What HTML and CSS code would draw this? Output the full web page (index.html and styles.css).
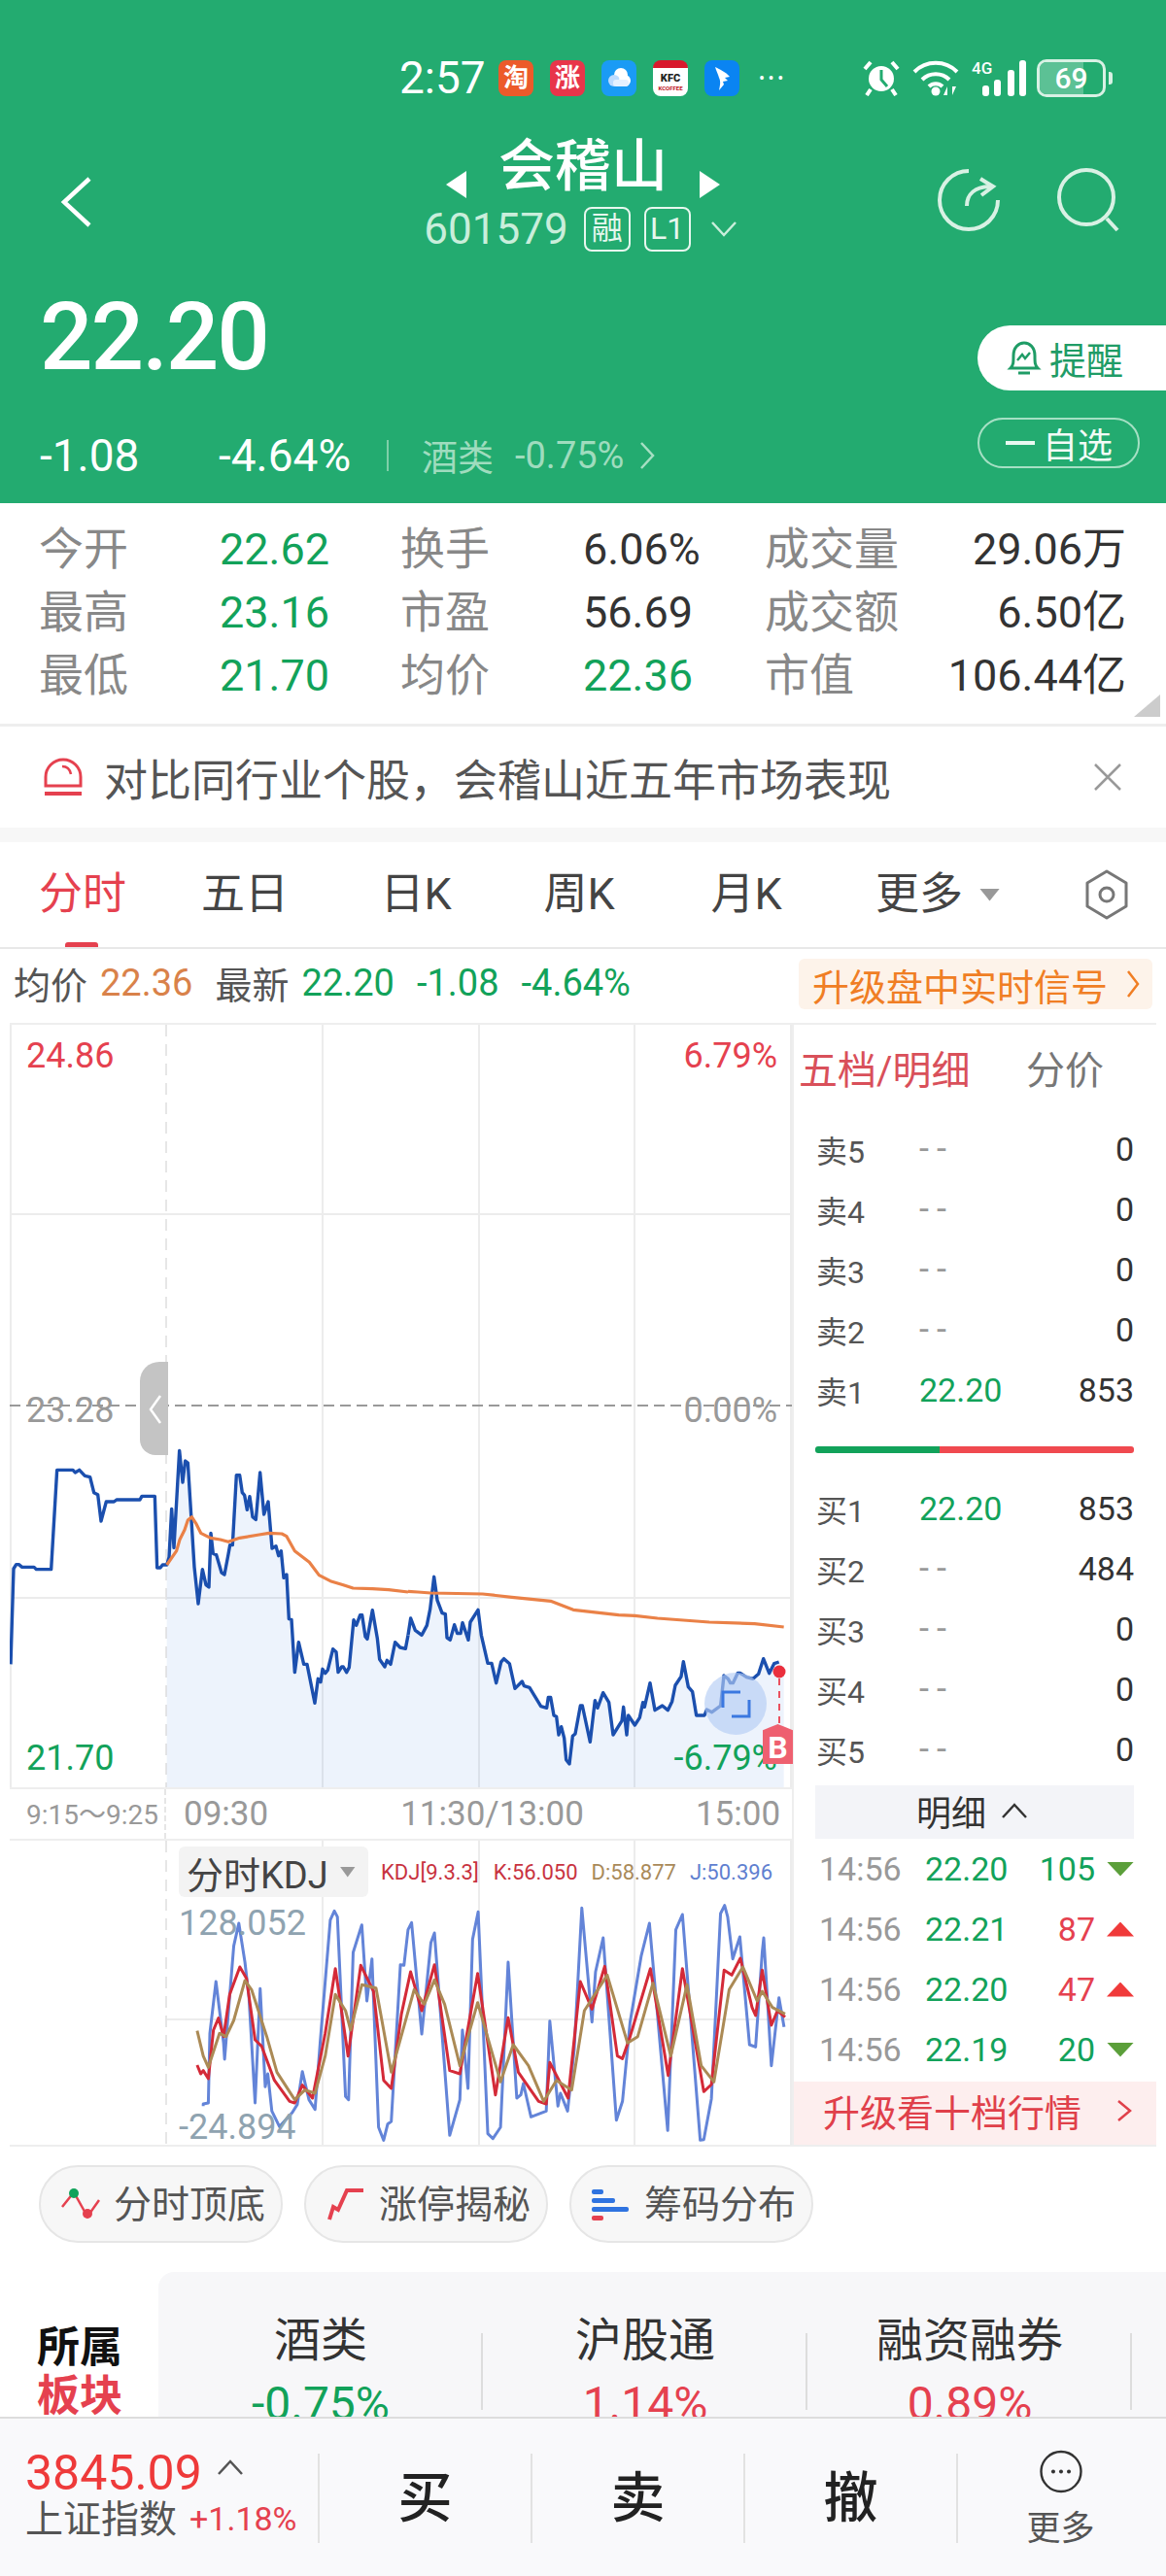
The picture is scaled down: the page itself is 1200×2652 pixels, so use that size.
FILE: index.html
```html
<!DOCTYPE html>
<html lang="zh-CN">
<head>
    <meta charset="UTF-8">
    <meta name="viewport" content="width=device-width, initial-scale=1.0">
    <title>会稽山</title>
    <link rel="stylesheet" href="styles.css">
</head>
<body>
<div class="page">
<main class="content">
    <header class="top">
        <div class="status">
            <span class="clock">2:57</span>
            <span class="app app-tao">淘</span>
            <span class="app app-zhang">涨</span>
            <span class="app app-cloud">
                <svg width="36" height="36" viewBox="0 0 36 36"><circle cx="20" cy="15" r="7" fill="#fff"/><circle cx="13" cy="21" r="6" fill="#bcdcff"/><circle cx="24" cy="21" r="6" fill="#fff"/><rect x="12" y="20" width="16" height="7" rx="3" fill="#e4f1ff"/></svg>
            </span>
            <span class="app app-kfc"><b>KFC</b><i>KCOFFEE</i></span>
            <span class="app app-wing">
                <svg width="36" height="36" viewBox="0 0 36 36"><path d="M11 7c4 2 11 5 15 10l-5 1 3 3-5 1 1 3-5 6c1-5 2-9 0-13-1-4-3-7-4-11z" fill="#fff"/></svg>
            </span>
            <span class="more-dots">•••</span>
            <span class="status-right">
                <svg width="40" height="38" viewBox="0 0 40 38" fill="none" stroke="#fff"><circle cx="20" cy="20" r="13" fill="#fff" stroke="none"/><path d="M20 11v10l6 7" stroke="#23ab70" stroke-width="3"/><path d="M3 10l6-7M37 10l-6-7M9 31l-4 6M31 31l4 6" stroke-width="4"/></svg>
                <svg width="48" height="38" viewBox="0 0 48 38" fill="none" stroke="#fff" stroke-width="4"><path d="M2 13a31 31 0 0 1 44 0M10 21a20 20 0 0 1 28 0M17 28a10 10 0 0 1 14 0"/><circle cx="24" cy="33" r="4.5" fill="#fff" stroke="none"/><path d="M36 37v-9l-4 9zM41 28v9l4-9z" fill="#fff" stroke="none"/></svg>
                <span class="signal">
                    <em>4G</em>
                    <svg width="48" height="37" viewBox="0 0 48 37" fill="#fff"><rect x="3" y="26" width="7" height="11" rx="3"/><rect x="15" y="20" width="7" height="17" rx="3"/><rect x="29" y="10" width="7" height="27" rx="3"/><rect x="41" y="0" width="7" height="37" rx="3"/></svg>
                </span>
                <span class="battery"><span class="battery-fill"></span><span class="battery-num">69</span></span>
                <span class="battery-cap"></span>
            </span>
        </div>

        <div class="nav">
            <svg class="back" width="32" height="52" viewBox="0 0 32 52" fill="none" stroke="#fff" stroke-width="4.5"><path d="M30 2L4 26l26 24"/></svg>
            <div class="nav-mid">
                <div class="title-row">
                    <span class="tri-left"></span>
                    <h1>会稽山</h1>
                    <span class="tri-right"></span>
                </div>
                <div class="code-row">
                    <span class="code">601579</span>
                    <span class="tag">融</span>
                    <span class="tag">L1</span>
                    <svg width="26" height="16" viewBox="0 0 26 16" fill="none" stroke="#c9eedb" stroke-width="2.5"><path d="M1 1l12 13L25 1"/></svg>
                </div>
            </div>
            <div class="nav-actions">
                <svg width="66" height="68" viewBox="965 174 66 68" fill="none" stroke="#d8f1e4" stroke-width="4"><path d="M997 177A30 30 0 1 0 1027 207"/><path d="M995 213c0-12 8-20 26-20"/><path d="M1009 185l13 8-12 9"/></svg>
                <svg width="64" height="66" viewBox="1088 174 64 66" fill="none" stroke="#d8f1e4" stroke-width="4"><circle cx="1118" cy="204" r="28"/><path d="M1139 226l11 12"/></svg>
            </div>
        </div>

        <div class="quote">
            <div>
                <div class="price">22.20</div>
                <div class="change">
                    <span class="chg-a">-1.08</span>
                    <span class="chg-b">-4.64%</span>
                    <span class="chg-sep"></span>
                    <span class="chg-sector">酒类</span>
                    <span class="chg-sector-num">-0.75%</span>
                    <svg width="16" height="30" viewBox="0 0 16 30" fill="none" stroke="#a6dfc3" stroke-width="2.5"><path d="M2 2l12 13L2 28"/></svg>
                </div>
            </div>
            <div class="quote-btns">
                <div class="remind">
                    <svg width="36" height="38" viewBox="0 0 36 38" fill="none" stroke="#1f9c66" stroke-width="3"><path d="M4 29c3-3 3-6 3-13C7 8 12 3 18 3s11 5 11 13c0 7 0 10 3 13z"/><path d="M12 34h12"/><path d="M11 21l5-6 3 4 5-6" stroke-width="2.5"/></svg>
                    <span>提醒</span>
                </div>
                <div class="watch"><i></i><span>自选</span></div>
            </div>
        </div>
    </header>

    <section class="stats">
        <span class="stat-label">今开</span><span class="stat-val up">22.62</span>
        <span class="stat-label">换手</span><span class="stat-val">6.06%</span>
        <span class="stat-label">成交量</span><span class="stat-val last">29.06万</span>
        <span class="stat-label">最高</span><span class="stat-val up">23.16</span>
        <span class="stat-label">市盈</span><span class="stat-val">56.69</span>
        <span class="stat-label">成交额</span><span class="stat-val last">6.50亿</span>
        <span class="stat-label">最低</span><span class="stat-val up">21.70</span>
        <span class="stat-label">均价</span><span class="stat-val up">22.36</span>
        <span class="stat-label">市值</span><span class="stat-val last">106.44亿</span>
        <span class="corner"></span>
    </section>

    <section class="notice">
        <svg width="42" height="40" viewBox="0 0 42 40" fill="none" stroke="#e5414f" stroke-width="3"><path d="M3 29V20a18 18 0 0 1 36 0v9z"/><path d="M20 9c5 0 8 3 9 8" stroke-width="2.5"/><path d="M2 37h38" stroke-width="4"/></svg>
        <span class="notice-text">对比同行业个股，会稽山近五年市场表现</span>
        <svg class="notice-close" width="30" height="28" viewBox="0 0 30 28" fill="none" stroke="#999" stroke-width="2.5"><path d="M2 1l26 26M28 1L2 27"/></svg>
    </section>

    <nav class="tabs">
        <span class="tab active">分时</span>
        <span class="tab">五日</span>
        <span class="tab">日K</span>
        <span class="tab">周K</span>
        <span class="tab">月K</span>
        <span class="tab tab-more">更多<i></i></span>
        <svg class="tab-gear" width="48" height="52" viewBox="0 0 48 52" fill="none" stroke="#777" stroke-width="3"><path d="M24 2l20 12v24L24 50 4 38V14z" stroke-linejoin="round"/><circle cx="24" cy="26" r="7"/></svg>
    </nav>

    <div class="info">
        <span class="info-name">均价</span><span class="info-avg">22.36</span>
        <span class="info-name info-new">最新</span><span class="info-num">22.20</span>
        <span class="info-num info-gap">-1.08</span><span class="info-num info-gap">-4.64%</span>
        <span class="upgrade-chip">升级盘中实时信号
            <svg width="14" height="30" viewBox="0 0 14 30" fill="none" stroke="#f07e24" stroke-width="2.5"><path d="M2 2l10 13L2 28"/></svg>
        </span>
    </div>

    <section class="market">
        <div class="charts">
            <div class="chart">
                <svg class="chart-svg" width="805" height="785" viewBox="10 1055 805 785">
                    <g stroke="#ececec" stroke-width="2" fill="none">
                        <path d="M11 1055V1840M332 1055V1840M493 1055V1840M653 1055V1840M814 1055V1840M10 1250H815M10 1645H815"/>
                        <path d="M171 1055V1840" stroke-dasharray="12 8" stroke="#e6e6e6"/>
                    </g>
                    <path d="M10 1447H815" stroke="#999" stroke-width="2" stroke-dasharray="11 6"/>

                    <!-- 分时线 左半段 -->
                    <g transform="translate(0,1440) scale(.33333)">
                        <polygon class="area" points="515,513 522,490 530,340 537,460 554,160 564,258 572,192 580,198 600,520 612,633 625,527 636,575 645,582 651,415 658,478 668,482 684,537 693,543 705,480 710,452 718,452 730,236 740,236 748,290 755,298 763,343 771,302 780,365 790,373 803,228 815,357 828,318 840,462 852,455 860,485 868,470 876,553 885,543 892,680 900,682 910,845 922,752 938,820 948,820 972,940 982,865 990,875 996,835 1004,848 1012,838 1028,773 1038,782 1044,845 1055,828 1060,828 1070,845 1078,830 1092,683 1100,700 1112,668 1118,668 1128,735 1134,742 1150,653 1165,740 1172,805 1188,828 1195,808 1206,820 1220,752 1235,768 1252,772 1260,730 1260,1200 515,1200"/>
                        <polyline class="line-price" points="33,820 42,525 50,512 58,512 68,520 105,520 112,527 158,527 176,220 225,220 232,228 245,220 262,238 278,242 290,290 302,296 312,378 328,318 352,318 360,312 432,312 438,301 478,301 485,522 495,522 502,513 515,513 522,490 530,340 537,460 554,160 564,258 572,192 580,198 600,520 612,633 625,527 636,575 645,582 651,415 658,478 668,482 684,537 693,543 705,480 710,452 718,452 730,236 740,236 748,290 755,298 763,343 771,302 780,365 790,373 803,228 815,357 828,318 840,462 852,455 860,485 868,470 876,553 885,543 892,680 900,682 910,845 922,752 938,820 948,820 972,940 982,865 990,875 996,835 1004,848 1012,838 1028,773 1038,782 1044,845 1055,828 1060,828 1070,845 1078,830 1092,683 1100,700 1112,668 1118,668 1128,735 1134,742 1150,653 1165,740 1172,805 1188,828 1195,808 1206,820 1220,752 1235,768 1252,772 1260,730"/>
                        <polyline class="line-avg" points="515,513 545,470 555,435 570,405 580,375 592,365 605,385 620,415 650,430 680,435 705,442 740,430 800,420 830,415 870,417 885,425 910,470 955,505 985,545 1020,563 1060,575 1090,585 1150,587 1200,590 1260,597"/>
                    </g>
                    <!-- 分时线 右半段 -->
                    <g transform="translate(410,1540) scale(.33333)">
                        <polygon class="area" points="30,430 38,378 52,415 72,430 88,400 98,350 110,250 120,322 135,362 145,365 150,438 160,445 173,398 182,425 192,425 198,392 216,445 222,390 246,352 256,430 276,517 288,517 302,578 317,513 326,503 343,518 360,595 382,573 388,587 405,592 440,650 458,655 463,622 470,622 480,678 488,682 495,738 503,713 512,748 518,815 528,828 538,742 546,735 562,648 568,648 592,760 607,632 615,655 632,608 650,638 663,738 690,695 695,652 705,738 710,678 730,708 745,685 755,638 760,652 777,578 792,662 815,648 832,662 845,635 855,585 873,558 880,512 895,590 908,605 920,678 945,678 952,660 968,668 995,648 1005,555 1018,565 1025,578 1033,578 1048,547 1055,547 1075,560 1095,565 1112,550 1127,503 1145,548 1160,518 1175,513 1190,530 1190,900 30,900"/>
                        <polyline class="line-price" points="30,430 38,378 52,415 72,430 88,400 98,350 110,250 120,322 135,362 145,365 150,438 160,445 173,398 182,425 192,425 198,392 216,445 222,390 246,352 256,430 276,517 288,517 302,578 317,513 326,503 343,518 360,595 382,573 388,587 405,592 440,650 458,655 463,622 470,622 480,678 488,682 495,738 503,713 512,748 518,815 528,828 538,742 546,735 562,648 568,648 592,760 607,632 615,655 632,608 650,638 663,738 690,695 695,652 705,738 710,678 730,708 745,685 755,638 760,652 777,578 792,662 815,648 832,662 845,635 855,585 873,558 880,512 895,590 908,605 920,678 945,678 952,660 968,668 995,648 1005,555 1018,565 1025,578 1033,578 1048,547 1055,547 1075,560 1095,565 1112,550 1127,503 1145,548 1160,518 1175,513"/>
                        <polyline class="line-avg" points="30,295 60,297 100,300 260,303 350,313 470,325 540,352 680,368 730,370 800,378 960,390 1100,395 1190,405"/>
                    </g>

                    <circle cx="757" cy="1754" r="32" fill="#b4cdf5" fill-opacity=".65"/>
                    <path d="M744 1758v-16h18M753 1767h18v-17" fill="none" stroke="#3b78e0" stroke-width="3"/>
                    <circle cx="802" cy="1721" r="6.5" fill="#ea2f3d"/>
                    <path d="M802 1728v47" stroke="#ea5060" stroke-width="2" stroke-dasharray="7 6"/>
                </svg>

                <span class="lbl lbl-left lbl-top red">24.86</span>
                <span class="lbl lbl-right lbl-top red">6.79%</span>
                <span class="lbl lbl-left lbl-mid gray">23.28</span>
                <span class="lbl lbl-right lbl-mid gray">0.00%</span>
                <span class="lbl lbl-left lbl-low green">21.70</span>
                <span class="lbl lbl-right lbl-low green">-6.79%</span>
                <span class="b-mark">B</span>
                <span class="handle">
                    <svg width="14" height="32" viewBox="0 0 14 32" fill="none" stroke="#fff" stroke-width="2.5"><path d="M12 2L2 16l10 14"/></svg>
                </span>
            </div>

            <div class="axis">
                <span class="axis-pre">9:15～9:25</span>
                <span class="axis-a">09:30</span>
                <span class="axis-b">11:30/13:00</span>
                <span class="axis-c">15:00</span>
            </div>

            <div class="kdj">
                <svg class="kdj-svg" width="805" height="313" viewBox="10 1895 805 313">
                    <g stroke="#ececec" stroke-width="2" fill="none">
                        <path d="M332 1895V2208M493 1895V2208M653 1895V2208M814 1895V2208M171 2079H815"/>
                        <path d="M171 1895V2208" stroke-dasharray="12 8" stroke="#e6e6e6"/>
                    </g>
                    <g transform="translate(0,1840) scale(.52296,.33333)" fill="none">
                        <polyline class="kdj-line" stroke="#6384d8" points="400,985 400,978 410,975 413,760 425,600 440,790 442,840 460,490 470,420 482,540 490,650 502,975 512,622 522,925 527,885 535,1000 550,1048 575,1005 585,980 595,878 608,965 620,995 630,790 650,410 658,382 664,400 680,955 686,965 695,510 712,425 722,660 732,530 745,1050 755,1090 763,1040 770,1032 788,548 795,550 803,440 810,418 830,762 848,480 855,450 885,1075 905,965 910,750 921,930 930,470 941,385 960,1070 970,1085 985,1050 1000,540 1017,960 1025,950 1030,915 1045,1018 1075,1000 1082,722 1098,985 1103,945 1117,1000 1130,810 1145,373 1165,725 1172,570 1187,465 1213,1028 1225,970 1240,725 1262,520 1278,420 1314,1060 1330,440 1343,393 1378,1090 1385,1088 1400,962 1418,390 1426,365 1432,400 1442,530 1456,462 1475,795 1487,802 1500,510 1503,465 1518,860 1533,650 1543,740"/>
                        <polyline class="kdj-line" stroke="#d42a38" points="388,858 395,885 400,875 410,900 420,750 430,713 440,770 452,640 472,555 485,590 502,780 515,800 540,905 570,970 580,975 595,920 615,960 640,760 660,560 685,830 710,550 735,630 755,905 770,930 790,700 808,570 830,690 855,548 885,875 905,885 940,575 975,950 1000,712 1020,880 1060,970 1075,978 1082,850 1118,960 1142,600 1165,685 1190,553 1215,830 1225,838 1240,770 1280,560 1315,890 1343,560 1385,940 1400,918 1425,565 1440,580 1457,528 1480,680 1487,705 1500,565 1518,735 1530,690 1545,710"/>
                        <polyline class="kdj-line" stroke="#ab8a55" points="388,752 400,830 410,865 432,760 445,770 460,720 482,597 495,625 525,770 545,880 580,965 600,935 620,945 640,830 660,640 680,690 690,750 712,610 740,620 770,880 815,625 835,670 855,595 875,670 905,860 940,665 985,910 1010,795 1040,860 1070,970 1095,905 1125,935 1150,690 1195,580 1235,790 1255,770 1285,605 1320,830 1352,610 1380,860 1405,910 1435,625 1462,555 1490,660 1500,630 1520,680 1545,700"/>
                    </g>
                </svg>
                <div class="kdj-legend">
                    <span class="kdj-chip">分时KDJ<i></i></span>
                    <span class="leg leg-k">KDJ[9.3.3]</span>
                    <span class="leg leg-k">K:56.050</span>
                    <span class="leg leg-d">D:58.877</span>
                    <span class="leg leg-j">J:50.396</span>
                </div>
                <span class="kdj-max">128.052</span>
                <span class="kdj-min">-24.894</span>
            </div>
        </div>

        <aside class="side">
            <div class="side-head"><span class="side-on">五档/明细</span><span class="side-off">分价</span></div>
            <div class="book">
                <div class="book-row"><span>卖5</span><span class="dash">--</span><span class="vol">0</span></div>
                <div class="book-row"><span>卖4</span><span class="dash">--</span><span class="vol">0</span></div>
                <div class="book-row"><span>卖3</span><span class="dash">--</span><span class="vol">0</span></div>
                <div class="book-row"><span>卖2</span><span class="dash">--</span><span class="vol">0</span></div>
                <div class="book-row"><span>卖1</span><span class="green">22.20</span><span class="vol">853</span></div>
            </div>
            <div class="ratio"><span class="ratio-buy"></span><span class="ratio-sell"></span></div>
            <div class="book book-buy">
                <div class="book-row"><span>买1</span><span class="green">22.20</span><span class="vol">853</span></div>
                <div class="book-row"><span>买2</span><span class="dash">--</span><span class="vol">484</span></div>
                <div class="book-row"><span>买3</span><span class="dash">--</span><span class="vol">0</span></div>
                <div class="book-row"><span>买4</span><span class="dash">--</span><span class="vol">0</span></div>
                <div class="book-row"><span>买5</span><span class="dash">--</span><span class="vol">0</span></div>
            </div>
            <div class="detail-head">明细
                <svg width="26" height="16" viewBox="0 0 26 16" fill="none" stroke="#333" stroke-width="2.5"><path d="M1 15L13 2l12 13"/></svg>
            </div>
            <div class="deal"><span class="deal-time">14:56</span><span class="green">22.20</span><span class="deal-vol green">105</span><i class="down"></i></div>
            <div class="deal"><span class="deal-time">14:56</span><span class="green">22.21</span><span class="deal-vol red">87</span><i class="rise"></i></div>
            <div class="deal"><span class="deal-time">14:56</span><span class="green">22.20</span><span class="deal-vol red">47</span><i class="rise"></i></div>
            <div class="deal"><span class="deal-time">14:56</span><span class="green">22.19</span><span class="deal-vol green">20</span><i class="down"></i></div>
            <div class="upgrade-ten">升级看十档行情
                <svg width="16" height="24" viewBox="0 0 16 24" fill="none" stroke="#e0404a" stroke-width="2.5"><path d="M2 2l12 10L2 22"/></svg>
            </div>
        </aside>
    </section>

    <div class="pills">
        <span class="pill">
            <svg width="40" height="34" viewBox="0 0 40 34" fill="none"><path d="M1 20L13 5l14 25 12-17" stroke="#e5414f" stroke-width="2.5"/><circle cx="13" cy="6" r="5" fill="#12a25a"/><circle cx="27" cy="27" r="5" fill="#e5414f"/></svg>
            <span>分时顶底</span>
        </span>
        <span class="pill">
            <svg width="40" height="34" viewBox="0 0 40 34" fill="none" stroke="#e5414f" stroke-width="4"><path d="M3 33l4-13 5 3 9-20h17"/></svg>
            <span>涨停揭秘</span>
        </span>
        <span class="pill">
            <svg width="40" height="34" viewBox="0 0 40 34"><rect x="0" y="2" width="12" height="5" rx="2" fill="#2f73e0"/><rect x="0" y="11" width="24" height="5" rx="2" fill="#2f73e0"/><rect x="0" y="20" width="38" height="5" rx="2" fill="#2f73e0"/><rect x="0" y="29" width="12" height="5" rx="2" fill="#e5414f"/></svg>
            <span>筹码分布</span>
        </span>
    </div>

    <section class="sector">
        <div class="sector-label">所属<em>板块</em></div>
        <div class="sector-card">
            <div class="sector-item"><span class="sector-name">酒类</span><span class="sector-pct green">-0.75%</span></div>
            <div class="sector-item"><span class="sector-name">沪股通</span><span class="sector-pct red">1.14%</span></div>
            <div class="sector-item"><span class="sector-name">融资融券</span><span class="sector-pct red">0.89%</span></div>
        </div>
    </section>
</main>

<footer class="bar">
    <div class="bar-idx">
        <div class="idx-top"><span class="idx-num">3845.09</span>
            <svg width="26" height="16" viewBox="0 0 26 16" fill="none" stroke="#555" stroke-width="2.5"><path d="M1 15L13 2l12 13"/></svg>
        </div>
        <div class="idx-bottom"><span class="idx-name">上证指数</span><span class="idx-chg">+1.18%</span></div>
    </div>
    <div class="bar-btn">买</div>
    <div class="bar-btn">卖</div>
    <div class="bar-btn">撤</div>
    <div class="bar-btn bar-more">
        <svg width="56" height="56" viewBox="0 0 56 56" fill="none" stroke="#333" stroke-width="3"><circle cx="28" cy="28" r="25.5"/><circle cx="18" cy="28" r="2.5" fill="#333" stroke="none"/><circle cx="28" cy="28" r="2.5" fill="#333" stroke="none"/><circle cx="38" cy="28" r="2.5" fill="#333" stroke="none"/></svg>
        <span>更多</span>
    </div>
</footer>
</div>
</body>
</html>
```

FILE: styles.css
```css
* {
    box-sizing: border-box;
}
body {
    margin: 0;
    background-color: #fff;
    color: #333;
    font-family: Roboto, "Noto Sans CJK SC", sans-serif;
}
i, em {
    font-style: normal;
}
.page {
    width: 1200px;
    height: 2652px;
    display: flex;
    flex-direction: column;
    overflow: hidden;
}
.content {
    height: 2488px;
    overflow: hidden;
}
.green { color: #12a25a; }
.red { color: #e5414f; }
.gray { color: #999; }

/* 顶部绿色区 */
.top {
    height: 518px;
    background-color: #23ab70;
    color: #fff;
    padding-top: 60px;
}
.status {
    display: flex;
    align-items: center;
    height: 40px;
    padding-left: 411px;
}
.clock {
    width: 86px;
    margin-right: 16px;
    font-size: 46px;
    line-height: 40px;
}
.app {
    width: 36px;
    height: 37px;
    margin-right: 17px;
    border-radius: 8px;
    display: flex;
    flex-direction: column;
    align-items: center;
    justify-content: center;
    overflow: hidden;
    font-size: 26px;
    line-height: 30px;
    font-weight: 700;
}
.app-tao { background-color: #ec5a2a; }
.app-zhang { background-color: #e8354a; }
.app-cloud { background-color: #1a9bf5; }
.app-kfc {
    background-color: #fff;
    color: #b01020;
    border-top: 8px solid #d8182c;
}
.app-kfc b {
    font-size: 11px;
    line-height: 13px;
    color: #222;
}
.app-kfc i {
    font-size: 6px;
    line-height: 8px;
    color: #c01020;
}
.app-wing { background-color: #0a84f2; }
.more-dots {
    width: 30px;
    margin-left: 3px;
    font-size: 18px;
    letter-spacing: 3.5px;
    white-space: nowrap;
}
.status-right {
    display: flex;
    align-items: center;
    margin-left: 76px;
}
.status-right > svg:nth-child(2) {
    margin-left: 12px;
}
.signal {
    position: relative;
    width: 58px;
    height: 38px;
    margin-left: 11px;
    display: flex;
    align-items: flex-end;
    justify-content: flex-end;
}
.signal em {
    position: absolute;
    left: 2px;
    top: 0;
    font-size: 17px;
    line-height: 18px;
    font-weight: 500;
}
.battery {
    position: relative;
    width: 71px;
    height: 39px;
    margin-left: 11px;
    border: 3px solid #d8f1e4;
    border-radius: 10px;
    overflow: hidden;
    display: flex;
    align-items: center;
    justify-content: center;
}
.battery-fill {
    position: absolute;
    left: 0;
    top: 0;
    bottom: 0;
    width: 69%;
    background-color: #5cc195;
}
.battery-num {
    position: relative;
    font-size: 30px;
    font-weight: 500;
}
.battery-cap {
    width: 4px;
    height: 13px;
    margin-left: 3px;
    background-color: #d8f1e4;
    border-radius: 0 3px 3px 0;
}

.nav {
    display: grid;
    grid-template-columns: 350px 500px 350px;
    height: 118px;
    margin-top: 43px;
}
.back {
    margin: 39px 0 0 62px;
}
.nav-mid {
    display: flex;
    flex-direction: column;
    align-items: center;
}
.title-row {
    display: flex;
    align-items: flex-start;
    height: 70px;
}
.title-row h1 {
    margin: 0 33px;
    font-size: 58px;
    line-height: 56px;
    font-weight: 500;
}
.tri-left, .tri-right {
    width: 21px;
    height: 28px;
    margin-top: 33px;
    background-color: #fff;
}
.tri-left { clip-path: polygon(100% 0, 100% 100%, 0 50%); }
.tri-right { clip-path: polygon(0 0, 0 100%, 100% 50%); }
.code-row {
    display: flex;
    align-items: center;
    height: 46px;
    margin-left: -6px;
}
.code {
    font-size: 44px;
    line-height: 46px;
    color: #c9eedb;
    margin-right: 16px;
}
.tag {
    min-width: 48px;
    height: 46px;
    margin-right: 14px;
    border: 2px solid #e6f7ee;
    border-radius: 8px;
    text-align: center;
    font-size: 32px;
    line-height: 40px;
    color: #e6f7ee;
}
.code-row svg {
    margin: 0 0 0 7px;
}
.nav-actions {
    display: flex;
    justify-content: flex-end;
    gap: 57px;
    padding: 30px 48px 0 0;
}

.quote {
    display: flex;
    justify-content: space-between;
    padding-left: 44px;
    margin-top: 36px;
}
.price {
    height: 100px;
    margin-left: -3px;
    font-size: 96px;
    line-height: 100px;
    letter-spacing: -2px;
    font-weight: 500;
}
.change {
    display: flex;
    align-items: center;
    height: 50px;
    margin-top: 47px;
    font-size: 46px;
}
.chg-a {
    width: 184px;
    margin-left: -3px;
}
.chg-b {
    width: 173px;
    white-space: nowrap;
}
.chg-sep {
    width: 2px;
    height: 32px;
    background-color: #7fcfa9;
    margin-right: 34px;
}
.chg-sector {
    width: 96px;
    font-size: 37px;
    color: #9fdcbe;
}
.chg-sector-num {
    width: 128px;
    font-size: 38px;
    color: #9fdcbe;
    white-space: nowrap;
}
.quote-btns {
    display: flex;
    flex-direction: column;
    align-items: flex-end;
    margin-top: 38px;
}
.remind {
    display: flex;
    align-items: center;
    gap: 8px;
    width: 194px;
    height: 67px;
    padding-left: 30px;
    background-color: #fff;
    border-radius: 34px 0 0 34px;
    color: #1f9c66;
    font-size: 38px;
}
.watch {
    display: flex;
    align-items: center;
    width: 167px;
    height: 52px;
    margin: 28px 27px 0 0;
    padding-left: 27px;
    border: 2px solid #a5e0c4;
    border-radius: 26px;
    font-size: 36px;
    color: #f2fbf6;
}
.watch i {
    width: 30px;
    height: 4px;
    margin-right: 8px;
    background-color: #e8f8f0;
}

/* 行情表 */
.stats {
    position: relative;
    display: grid;
    grid-template-columns: 186px 186px 188px 187px 180px 1fr;
    grid-auto-rows: 65px;
    align-items: center;
    height: 230px;
    padding: 15px 41px 0 40px;
    border-bottom: 3px solid #eee;
}
.stat-label {
    font-size: 46px;
    line-height: 65px;
    color: #888;
}
.stat-val {
    font-size: 45px;
    line-height: 65px;
    color: #333;
}
.stat-val.up { color: #12a25a; }
.stat-val.last { text-align: right; }
.corner {
    position: absolute;
    left: 1167px;
    top: 197px;
    width: 27px;
    height: 23px;
    background-color: #ccc;
    clip-path: polygon(100% 0, 100% 100%, 0 100%);
}

.notice {
    display: flex;
    align-items: center;
    height: 104px;
    padding: 0 45px 0 44px;
    border-bottom: 15px solid #f7f7f7;
    box-sizing: content-box;
}
.notice-text {
    margin-left: 21px;
    font-size: 45px;
    color: #555;
    white-space: nowrap;
}
.notice-close {
    margin-left: auto;
}

.tabs {
    display: grid;
    grid-template-columns: 170px 164px 188px 148px 196px 246px 1fr;
    align-items: center;
    height: 110px;
    border-bottom: 2px solid #e8e8e8;
    font-size: 45px;
    color: #444;
}
.tab {
    position: relative;
    text-align: center;
    line-height: 108px;
}
.tab.active {
    color: #e5414f;
}
.tab.active::after {
    content: "";
    position: absolute;
    left: 67px;
    bottom: 0;
    width: 34px;
    height: 5px;
    border-radius: 3px 3px 0 0;
    background-color: #e5414f;
}
.tab-more {
    display: flex;
    align-items: center;
    padding-left: 35px;
}
.tab-more i {
    width: 21px;
    height: 13px;
    margin-left: 17px;
    background-color: #999;
    clip-path: polygon(0 0, 100% 0, 50% 100%);
}
.tab-gear {
    margin-left: 3px;
}

.info {
    display: flex;
    align-items: center;
    height: 76px;
    padding: 0 0 7px 14px;
    font-size: 38px;
}
.info-name {
    color: #555;
}
.info-avg {
    margin-left: 13px;
    color: #d9824a;
}
.info-new {
    margin-left: 23px;
}
.info-num {
    margin-left: 13px;
    color: #12a25a;
}
.info-num.info-gap {
    margin-left: 23px;
}
.upgrade-chip {
    display: flex;
    align-items: center;
    justify-content: space-between;
    width: 364px;
    height: 52px;
    margin: 3px 14px 0 auto;
    padding: 0 13px 0 14px;
    background-color: #fdf3ea;
    border-radius: 6px;
    color: #f07e24;
    font-size: 38px;
    white-space: nowrap;
}

/* 分时图 + 五档 */
.market {
    display: flex;
    margin: 0 10px;
    border-top: 2px solid #eee;
    border-bottom: 2px solid #eee;
}
.charts {
    width: 805px;
}
.chart {
    position: relative;
    height: 785px;
}
.chart-svg, .kdj-svg {
    display: block;
}
.area {
    fill: #1f63d8;
    fill-opacity: .08;
}
.line-price, .line-avg, .kdj-line {
    fill: none;
    vector-effect: non-scaling-stroke;
    stroke-linejoin: round;
}
.line-price {
    stroke: #1b4fae;
    stroke-width: 3.4;
}
.line-avg {
    stroke: #ea8147;
    stroke-width: 3.2;
}
.kdj-line {
    stroke-width: 3;
}
.lbl {
    position: absolute;
    font-size: 36px;
    line-height: 42px;
}
.lbl-left { left: 17px; }
.lbl-right { right: 15px; }
.lbl-top { top: 11px; }
.lbl-mid { top: 376px; }
.lbl-low { top: 734px; }
.b-mark {
    position: absolute;
    left: 775px;
    top: 720px;
    width: 31px;
    height: 41px;
    padding-top: 6px;
    background-color: #ee6070;
    clip-path: polygon(0 15%, 50% 0, 100% 15%, 100% 100%, 0 100%);
    color: #fff;
    text-align: center;
    font-size: 32px;
    line-height: 36px;
    font-weight: 700;
}
.handle {
    position: absolute;
    left: 134px;
    top: 347px;
    width: 29px;
    height: 96px;
    padding: 33px 0 0 9px;
    background-color: #c4c4c4;
    border-radius: 20px 0 0 16px;
}
.handle svg {
    display: block;
}
.axis {
    display: flex;
    align-items: center;
    height: 55px;
    border-top: 2px solid #eee;
    border-bottom: 2px solid #eee;
    color: #999;
    font-size: 35px;
    white-space: nowrap;
}
.axis-pre {
    width: 161px;
    height: 100%;
    padding-left: 17px;
    border-right: 2px dashed #e6e6e6;
    font-size: 28px;
    line-height: 54px;
}
.axis-a { margin-left: 18px; }
.axis-b { margin-left: 136px; }
.axis-c { margin-left: 115px; }
.kdj {
    position: relative;
    height: 313px;
}
.kdj-legend {
    position: absolute;
    left: 174px;
    top: 6px;
    display: flex;
    align-items: center;
}
.kdj-chip {
    display: flex;
    align-items: center;
    width: 195px;
    height: 52px;
    padding-left: 8px;
    background-color: #f3f3f3;
    border-radius: 6px;
    font-size: 38px;
    color: #444;
}
.kdj-chip i {
    width: 16px;
    height: 11px;
    margin-left: 12px;
    background-color: #999;
    clip-path: polygon(0 0, 100% 0, 50% 100%);
}
.leg {
    font-size: 22px;
    white-space: nowrap;
}
.leg-k { color: #c8333f; margin-left: 15px; }
.leg-d { color: #a98a5a; margin-left: 14px; }
.leg-j { color: #5f7fd0; margin-left: 14px; }
.kdj-chip + .leg { margin-left: 13px; }
.kdj-max, .kdj-min {
    position: absolute;
    left: 174px;
    font-size: 36px;
    line-height: 42px;
    color: #8fa3b0;
}
.kdj-max { top: 64px; }
.kdj-min { top: 274px; }

.side {
    width: 375px;
    padding: 0 23px 0 22px;
    border-left: 2px solid #eee;
}
.side-head {
    display: flex;
    align-items: center;
    justify-content: space-between;
    height: 97px;
    padding: 0 31px 10px 0;
    margin-left: -17px;
    font-size: 40px;
}
.side-on { color: #d9505a; }
.side-off { color: #777; }
.book-row {
    display: grid;
    grid-template-columns: 106px 1fr auto;
    align-items: center;
    height: 62px;
    padding-left: 1px;
    font-size: 32px;
    color: #555;
}
.book-row .green,
.book-row .vol {
    font-size: 34px;
}
.book-row .vol {
    color: #333;
    text-align: right;
}
.dash {
    color: #999;
    font-size: 36px;
    letter-spacing: 8px;
}
.ratio {
    display: flex;
    height: 7px;
    margin-top: 27px;
    border-radius: 3px;
    overflow: hidden;
}
.ratio-buy {
    width: 128px;
    background-color: #12a25a;
}
.ratio-sell {
    flex: 1;
    background-color: #f0494f;
}
.book-buy {
    margin-top: 26px;
}
.detail-head {
    display: flex;
    align-items: center;
    justify-content: center;
    gap: 16px;
    height: 55px;
    margin-top: 6px;
    padding: 0 6px 4px 0;
    background-color: #f3f4f8;
    font-size: 36px;
    color: #333;
}
.deal {
    display: flex;
    align-items: center;
    height: 62px;
    font-size: 34px;
}
.deal-time {
    width: 113px;
    padding-left: 4px;
    color: #999;
}
.deal-vol {
    margin-left: auto;
}
.down, .rise {
    width: 28px;
    height: 15px;
    margin-left: 12px;
}
.down {
    background-color: #5b9f3a;
    clip-path: polygon(0 0, 100% 0, 50% 100%);
}
.rise {
    background-color: #f03a3a;
    clip-path: polygon(50% 0, 100% 100%, 0 100%);
}
.upgrade-ten {
    display: flex;
    align-items: center;
    justify-content: space-between;
    height: 65px;
    margin: 2px -23px 0 -22px;
    padding: 0 25px 6px 30px;
    background-color: #fdeeee;
    color: #e0404a;
    font-size: 38px;
}

.pills {
    display: flex;
    gap: 22px;
    padding: 19px 0 0 40px;
}
.pill {
    display: flex;
    align-items: center;
    gap: 14px;
    width: 251px;
    height: 80px;
    padding: 0 0 6px 21px;
    background-color: #f7f7f7;
    border: 2px solid #e6e6e6;
    border-radius: 40px;
    font-size: 39px;
    color: #555;
    white-space: nowrap;
}
.pill svg {
    margin-top: 6px;
}

.sector {
    display: flex;
    height: 180px;
    margin-top: 30px;
}
.sector-label {
    width: 163px;
    padding: 53px 0 0 38px;
    font-size: 44px;
    line-height: 50px;
    font-weight: 700;
    color: #111;
}
.sector-label em {
    display: block;
    color: #e5414f;
}
.sector-card {
    flex: 1;
    display: flex;
    padding-top: 43px;
    background-color: #f7f7f9;
    border-radius: 16px 0 0 0;
}
.sector-item {
    position: relative;
    width: 334px;
    display: flex;
    flex-direction: column;
    align-items: center;
}
.sector-item::after {
    content: "";
    position: absolute;
    right: 0;
    top: 20px;
    width: 2px;
    height: 79px;
    background-color: #ddd;
}
.sector-name {
    font-size: 48px;
    line-height: 56px;
    color: #333;
}
.sector-pct {
    margin-top: 9px;
    font-size: 48px;
    line-height: 56px;
}

/* 底部栏 */
.bar {
    display: flex;
    height: 164px;
    padding-top: 36px;
    background-color: #f9f9fb;
    border-top: 2px solid #ddd;
}
.bar-idx {
    width: 327px;
    height: 92px;
    padding-left: 26px;
}
.idx-top {
    display: flex;
    align-items: center;
    gap: 16px;
    height: 46px;
    margin-top: -3px;
}
.idx-top svg {
    margin-top: -12px;
}
.idx-num {
    font-size: 50px;
    line-height: 46px;
    color: #ee3a3a;
}
.idx-bottom {
    display: flex;
    align-items: center;
    gap: 13px;
    height: 44px;
    margin-top: -1px;
}
.idx-name {
    font-size: 39px;
    color: #555;
}
.idx-chg {
    font-size: 34px;
    color: #e5414f;
    margin-top: 6px;
}
.bar-btn {
    width: 219px;
    height: 92px;
    border-left: 2px solid #e2e2e2;
    text-align: center;
    font-size: 56px;
    line-height: 92px;
    font-weight: 500;
    color: #222;
}
.bar-more {
    width: 215px;
    height: 100px;
    display: flex;
    flex-direction: column;
    align-items: center;
    margin-top: -4px;
    font-weight: 400;
    background: linear-gradient(#e2e2e2, #e2e2e2) 0 4px / 2px 92px no-repeat;
    border-left: none;
}
.bar-more span {
    margin-top: 19px;
    font-size: 35px;
    line-height: 36px;
    color: #555;
}
```
